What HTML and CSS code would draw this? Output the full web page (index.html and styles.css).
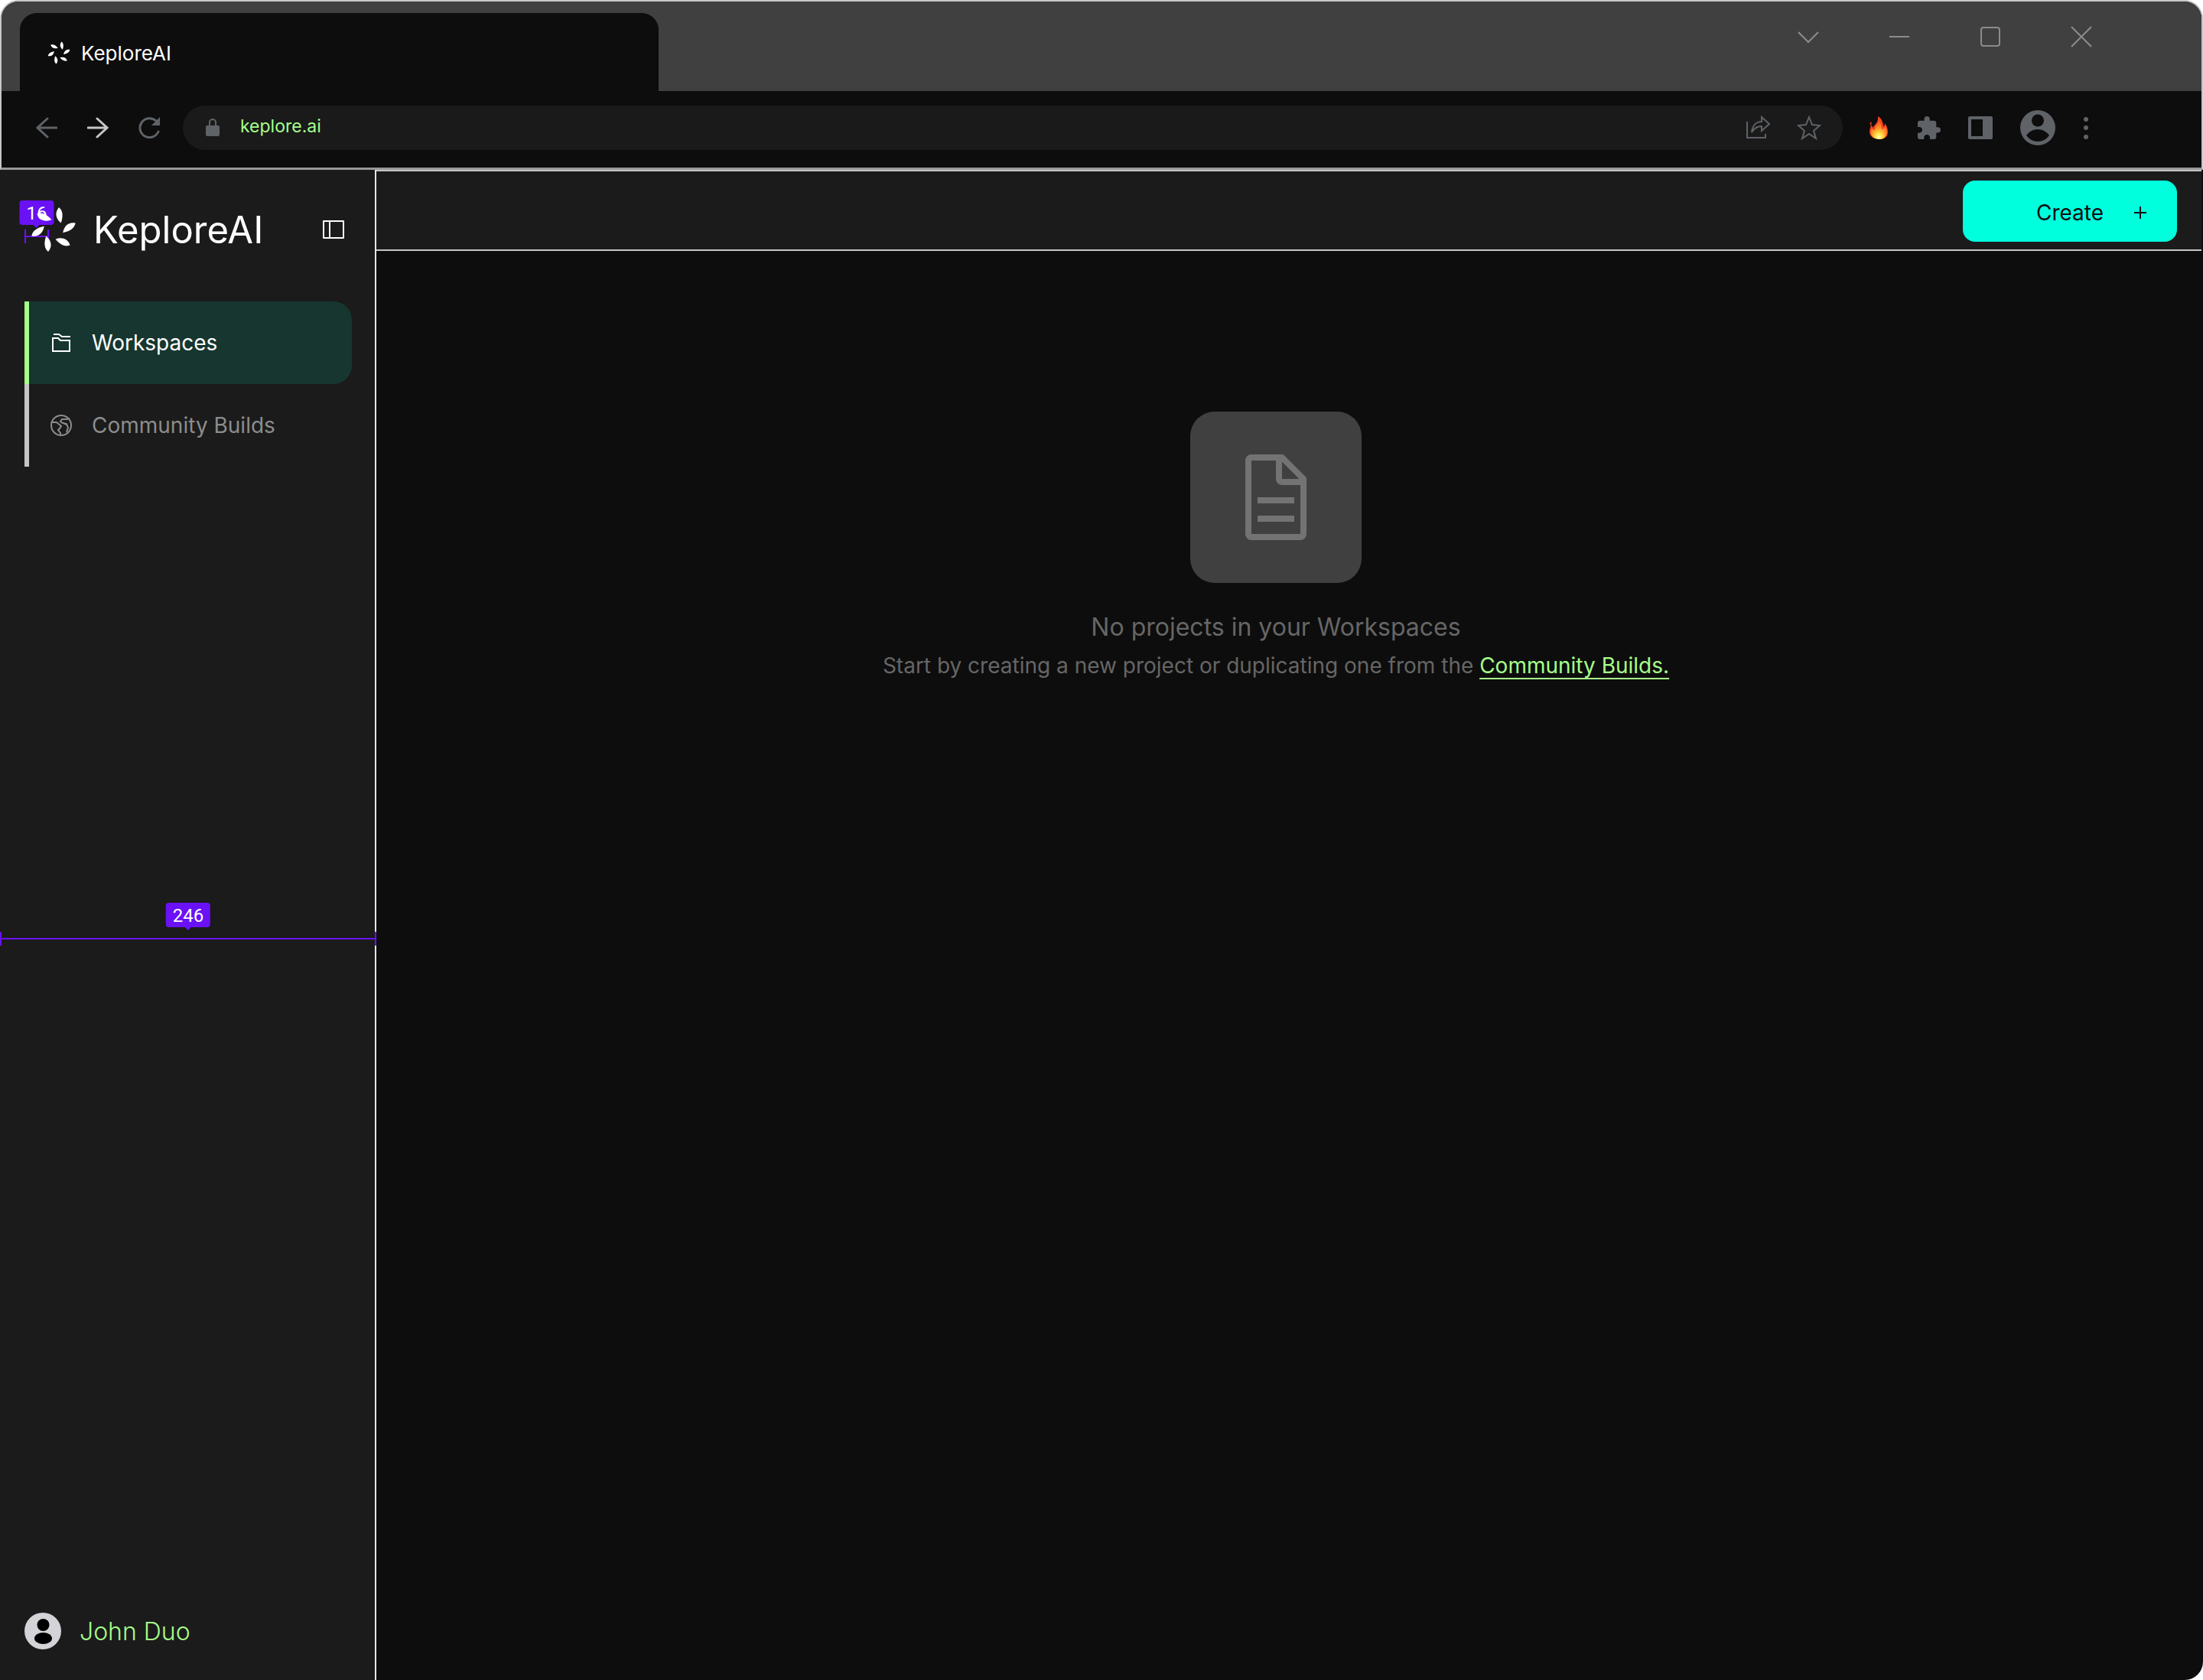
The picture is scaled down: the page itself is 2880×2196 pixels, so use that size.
FILE: index.html
```html
<!DOCTYPE html>
<html lang="en">
<head>
    <meta charset="UTF-8">
    <meta name="viewport" content="width=device-width, initial-scale=1.0">
    <title>KeploreAI</title>
    <link rel="stylesheet" href="styles.css">
</head>
<body>
    <svg class="defs" aria-hidden="true">
        <symbol id="logo" viewBox="0 0 60 60">
            <g fill="#fff">
                <path id="petal" d="M37 1C42 5 43 12 39.700 21.500C33 16 31 8 37 1Z"/>
                <use href="#petal" transform="rotate(60 30 30)"/>
                <use href="#petal" transform="rotate(120 30 30)"/>
                <use href="#petal" transform="rotate(180 30 30)"/>
                <use href="#petal" transform="rotate(240 30 30)"/>
                <use href="#petal" transform="rotate(300 30 30)"/>
            </g>
        </symbol>
    </svg>

    <header class="browser">
        <div class="tab-strip">
            <div class="tab">
                <svg class="tab-logo"><use href="#logo"/></svg>
                <span>KeploreAI</span>
            </div>
            <div class="window-buttons">
                <button aria-label="Tabs"><svg width="28" height="28" viewBox="0 0 28 28"><path d="M1 8l13 13L27 8"/></svg></button>
                <button aria-label="Minimize"><svg width="28" height="28" viewBox="0 0 28 28"><path d="M1 14h26"/></svg></button>
                <button aria-label="Maximize"><svg width="28" height="28" viewBox="0 0 28 28"><rect x="2" y="2" width="24" height="24" rx="3"/></svg></button>
                <button aria-label="Close"><svg width="28" height="28" viewBox="0 0 28 28"><path d="M1 1l26 26M27 1L1 27"/></svg></button>
            </div>
        </div>
        <div class="toolbar">
            <div class="history">
                <button aria-label="Back"><svg width="28" height="28" viewBox="0 0 28 28"><path d="M15 2L2 14l13 12M2 14h25"/></svg></button>
                <button class="forward" aria-label="Forward"><svg width="28" height="28" viewBox="0 0 28 28"><path d="M13 2l13 12-13 12M26 14H1"/></svg></button>
                <button aria-label="Reload"><svg width="28" height="28" viewBox="0 0 28 28"><path d="M26 19A12.500 12.500 0 1 1 23 5"/><path class="solid" d="M28 0v11H17z"/></svg></button>
            </div>
            <div class="address">
                <svg class="lock" width="18" height="24" viewBox="0 0 18 24"><rect x="0" y="9" width="18" height="14" rx="2" fill="#5f6368"/><path d="M5 10V5a4 4 0 0 1 8 0v5" fill="none" stroke="#5f6368" stroke-width="2"/></svg>
                <input type="text" value="keplore.ai" aria-label="Address">
                <button aria-label="Share"><svg width="32" height="32" viewBox="0 0 32 32"><path d="M1 8v21h24v-5M7 22C8 13 13 8 20 8V2l10 9-10 9v-6c-6 0-10 3-13 8z"/></svg></button>
                <button aria-label="Bookmark"><svg width="32" height="32" viewBox="0 0 32 32"><path d="M16 2l4 10 10 1-8 7 3 10-9-6-9 6 3-10-8-7 10-1z"/></svg></button>
            </div>
            <div class="extensions">
                <button aria-label="Streak">
                    <svg width="28" height="32" viewBox="0 0 28 32">
                        <defs>
                            <radialGradient id="fire" cx="50%" cy="90%" r="80%">
                                <stop offset="0" stop-color="#fffbd0"/>
                                <stop offset=".25" stop-color="#ffe23f"/>
                                <stop offset=".55" stop-color="#ff9a2e"/>
                                <stop offset="1" stop-color="#f4511e"/>
                            </radialGradient>
                        </defs>
                        <path d="M12 1c5 3 7 8 7 13 2-1 2-2 2-4 3 4 4 8 4 12 0 6-5 9-11 9S1 28 1 21c0-4 2-6 2-9 1 1 2 2 2 4 3-4 8-7 7-15z" fill="#f4431c"/>
                        <path d="M13 5c3 4 4 8 4 13 3-1 4-2 5-4 2 4 2 8 1 11-1 4-5 6-9 6S4 29 3 24c-1-3 0-5 1-7 1 1 2 2 4 2 0-5 5-8 5-14z" fill="url(#fire)"/>
                        <path d="M3 8c1 1 1 3-1 5 0-2-1-3 1-5z" fill="#f4431c"/>
                    </svg>
                </button>
                <button aria-label="Extensions"><svg width="30" height="30" viewBox="2 1 21 21"><path class="solid" d="M20.500 11H19V7c0-1.100-.9-2-2-2h-4V3.500a2.500 2.500 0 0 0-5 0V5H4c-1.100 0-2 .9-2 2v3.800h1.500c1.500 0 2.700 1.200 2.700 2.700S5 16.200 3.500 16.200H2V20c0 1.100.9 2 2 2h3.800v-1.500c0-1.500 1.200-2.700 2.700-2.700s2.700 1.200 2.700 2.700V22H17c1.100 0 2-.9 2-2v-4h1.500a2.500 2.500 0 0 0 0-5z"/></svg></button>
                <button aria-label="Side panel"><svg width="32" height="30" viewBox="0 0 32 30"><path class="solid" fill-rule="evenodd" d="M2 0h28a2 2 0 0 1 2 2v26a2 2 0 0 1-2 2H2a2 2 0 0 1-2-2V2a2 2 0 0 1 2-2zM4 4v22h15V4z"/></svg></button>
                <button aria-label="Profile"><svg width="46" height="46" viewBox="0 0 46 46"><circle class="solid" cx="23" cy="23" r="23"/><circle cx="23" cy="13.500" r="8" fill="#0d0d0d"/><path d="M8 33Q14 25 23 25T38 33Q32 41 23 41T8 33z" fill="#0d0d0d"/></svg></button>
                <button aria-label="Menu"><svg width="8" height="30" viewBox="0 0 8 30"><g class="solid"><circle cx="4" cy="4" r="3"/><circle cx="4" cy="15" r="3"/><circle cx="4" cy="27" r="3"/></g></svg></button>
            </div>
        </div>
    </header>

    <div class="app">
        <aside class="sidebar">
            <div class="brand">
                <svg class="brand-logo"><use href="#logo"/></svg>
                <span class="brand-name">KeploreAI</span>
                <button aria-label="Toggle sidebar"><svg width="28" height="24" viewBox="0 0 28 24"><path d="M1 1h26v22H1zM9 1v22" fill="none" stroke="#fff" stroke-width="2" stroke-linejoin="round"/></svg></button>
            </div>
            <nav class="menu">
                <a class="menu-item active" href="#workspaces">
                    <svg width="28" height="28" viewBox="0 0 28 28"><path d="M4 3h7l4 3h11M3 8h7l3 3h12v14H3z"/></svg>
                    Workspaces
                </a>
                <a class="menu-item" href="#community">
                    <svg width="28" height="28" viewBox="0 0 28 28"><circle cx="14" cy="14" r="13"/><path d="M1 10h7l6 5-2 3-2 2 3 4v3M25 5l-4 1h-6l-2 3 3 2 5 1 2 5-2 6M21 13l-4-2"/></svg>
                    Community Builds
                </a>
            </nav>
            <a class="user" href="#account">
                <svg width="48" height="48" viewBox="0 0 48 48"><circle cx="24" cy="24" r="24" fill="#d4d3d8"/><circle cx="24.500" cy="16" r="8" fill="#000"/><ellipse cx="24.500" cy="33.500" rx="11.500" ry="7.500" fill="#000"/></svg>
                John Duo
            </a>
            <div class="guide guide-small"><span class="guide-label">16</span></div>
            <div class="guide guide-wide"><span class="guide-label">246</span></div>
        </aside>

        <div class="content">
            <div class="topbar">
                <button class="create">
                    Create
                    <svg width="16" height="16" viewBox="0 0 16 16"><path d="M8 0v16M0 8h16" stroke="#0d0d0d" stroke-width="2"/></svg>
                </button>
            </div>
            <main class="empty">
                <div class="empty-icon">
                    <svg width="80" height="112" viewBox="0 0 80 112" fill="none" stroke="#737373" stroke-width="8">
                        <path d="M48 4H8a4 4 0 0 0-4 4v96a4 4 0 0 0 4 4h64a4 4 0 0 0 4-4V32z" stroke-linejoin="round"/>
                        <path d="M44 4v28a4 4 0 0 0 4 4h28M16 60h48M16 84h48"/>
                    </svg>
                </div>
                <h1>No projects in your Workspaces</h1>
                <p>Start by creating a new project or duplicating one from the <a href="#community">Community Builds.</a></p>
            </main>
        </div>
    </div>
</body>
</html>
```
FILE: styles.css
```css
* {
    box-sizing: border-box;
}

body {
    margin: 0;
    min-height: 100vh;
    display: flex;
    flex-direction: column;
    background: #fff;
    color: #fff;
    font-family: Inter, "Liberation Sans", sans-serif;
    font-size: 28px;
}

button {
    padding: 0;
    border: 0;
    background: none;
    font: inherit;
    cursor: pointer;
}

svg {
    display: block;
    flex-shrink: 0;
}

a {
    color: inherit;
    text-decoration: none;
}

.defs {
    position: absolute;
    width: 0;
    height: 0;
}

/* browser window */
.browser {
    border: 2px solid #c6c6c6;
    border-bottom: 3px solid #999;
    border-radius: 24px 24px 0 0;
    background: #0d0d0d;
    overflow: hidden;
}

.tab-strip {
    display: flex;
    justify-content: space-between;
    padding: 15px 143px 0 24px;
    background: #404040;
}

.tab {
    display: flex;
    align-items: center;
    gap: 14px;
    width: 29vw;
    height: 102px;
    padding: 2px 36px 0;
    border-radius: 22px 22px 0 0;
    background: #0d0d0d;
    font-size: 26px;
}

.tab-logo {
    width: 30px;
    height: 30px;
}

.window-buttons {
    display: flex;
    align-items: flex-start;
    gap: 91px;
    padding-top: 17px;
}

.window-buttons svg {
    fill: none;
    stroke: #8c8c8c;
    stroke-width: 2;
}

.toolbar {
    display: flex;
    align-items: center;
    gap: 30px;
    height: 100px;
    padding: 0 147px 4px 45px;
}

.toolbar svg {
    fill: none;
    stroke: #5f6368;
    stroke-width: 3;
    stroke-linecap: round;
}

.toolbar .solid {
    fill: #5f6368;
    stroke: none;
}

.history {
    display: flex;
    gap: 39px;
}

.toolbar .forward svg {
    stroke: #c6c6c6;
}

.address {
    flex: 1;
    display: flex;
    align-items: center;
    gap: 34px;
    height: 58px;
    margin-right: 4px;
    padding: 0 28px 0 30px;
    border-radius: 29px;
    background: #1a1a1a;
}

.address .lock,
.address button svg {
    stroke-width: 2;
    stroke-linecap: butt;
}

.address .lock {
    stroke: none;
}

.address input {
    flex: 1;
    min-width: 0;
    margin-left: -7px;
    padding: 0 0 4px;
    border: 0;
    outline: 0;
    background: none;
    color: #a6ff8a;
    font: inherit;
    font-size: 23px;
}

.extensions {
    display: flex;
    align-items: center;
    gap: 36px;
}

.extensions svg {
    stroke: none;
}

/* app */
.app {
    flex: 1;
    display: flex;
    border-radius: 0 0 24px 0;
    background: #0d0d0d;
}

.sidebar {
    position: relative;
    display: flex;
    flex-direction: column;
    width: 492px;
    padding: 48px 30px 40px 32px;
    border-right: 2px solid #e5e5e5;
    background: #1b1b1b;
}

.brand {
    display: flex;
    align-items: center;
    gap: 22px;
    height: 60px;
    padding: 0 10px 0 8px;
}

.brand-logo {
    position: relative;
    z-index: 1;
    width: 60px;
    height: 60px;
}

.brand-name {
    flex: 1;
    font-size: 49px;
}

.menu {
    margin-top: 64px;
}

.menu-item {
    display: flex;
    align-items: center;
    gap: 26px;
    height: 108px;
    padding-left: 28px;
    border-left: 6px solid #c6c6c6;
    color: #8c8c8c;
}

.menu-item svg {
    fill: none;
    stroke: currentColor;
    stroke-width: 2;
}

.menu-item.active {
    border-left-color: #a6ff8a;
    border-radius: 0 24px 24px 0;
    background: #16362f;
    color: #fff;
}

.user {
    display: flex;
    align-items: center;
    gap: 24px;
    margin-top: auto;
    color: #a6ff8a;
    font-size: 32px;
    font-weight: 300;
}

/* spacing guides over the sidebar */
.guide {
    position: absolute;
    height: 18px;
    border: solid #6a11f5;
    border-width: 0 2px;
    background: linear-gradient(#6a11f5, #6a11f5) center / 100% 2px no-repeat;
}

.guide-small {
    top: 78px;
    left: 32px;
    width: 32px;
}

.guide-wide {
    top: 996px;
    left: 0;
    right: -2px;
}

.guide-label {
    position: absolute;
    bottom: 24px;
    left: 50%;
    padding: 2px 9px 0;
    border-radius: 4px;
    background: #6a11f5;
    font-family: Roboto, sans-serif;
    font-size: 24px;
    line-height: 30px;
    transform: translateX(-50%);
}

.guide-label::after {
    content: "";
    position: absolute;
    top: 100%;
    left: 50%;
    border: 4px solid transparent;
    border-top-color: #6a11f5;
    transform: translateX(-50%);
}

.content {
    flex: 1;
    display: flex;
    flex-direction: column;
}

.topbar {
    display: flex;
    justify-content: flex-end;
    margin-right: 2px;
    padding: 12px 32px 10px;
    border: solid #c6c6c6;
    border-width: 2px 0;
    background: #1b1b1b;
}

.create {
    display: flex;
    align-items: center;
    justify-content: flex-end;
    gap: 40px;
    width: 280px;
    height: 80px;
    padding: 4px 40px 0 0;
    border-radius: 16px;
    background: #00ffdd;
    color: #0d0d0d;
}

.empty {
    display: flex;
    flex-direction: column;
    align-items: center;
    padding: 210px 36px 0 0;
    color: #666;
}

.empty-icon {
    display: flex;
    align-items: center;
    justify-content: center;
    width: 224px;
    height: 224px;
    border-radius: 32px;
    background: #404040;
}

.empty h1 {
    margin: 36px 0 0;
    font-size: 32px;
    font-weight: 400;
    line-height: 44px;
}

.empty p {
    margin: 8px 0 0;
    line-height: 40px;
}

.empty a {
    color: #a6ff8a;
    text-decoration: underline;
    text-decoration-thickness: 2px;
    text-underline-offset: 6px;
}
```
